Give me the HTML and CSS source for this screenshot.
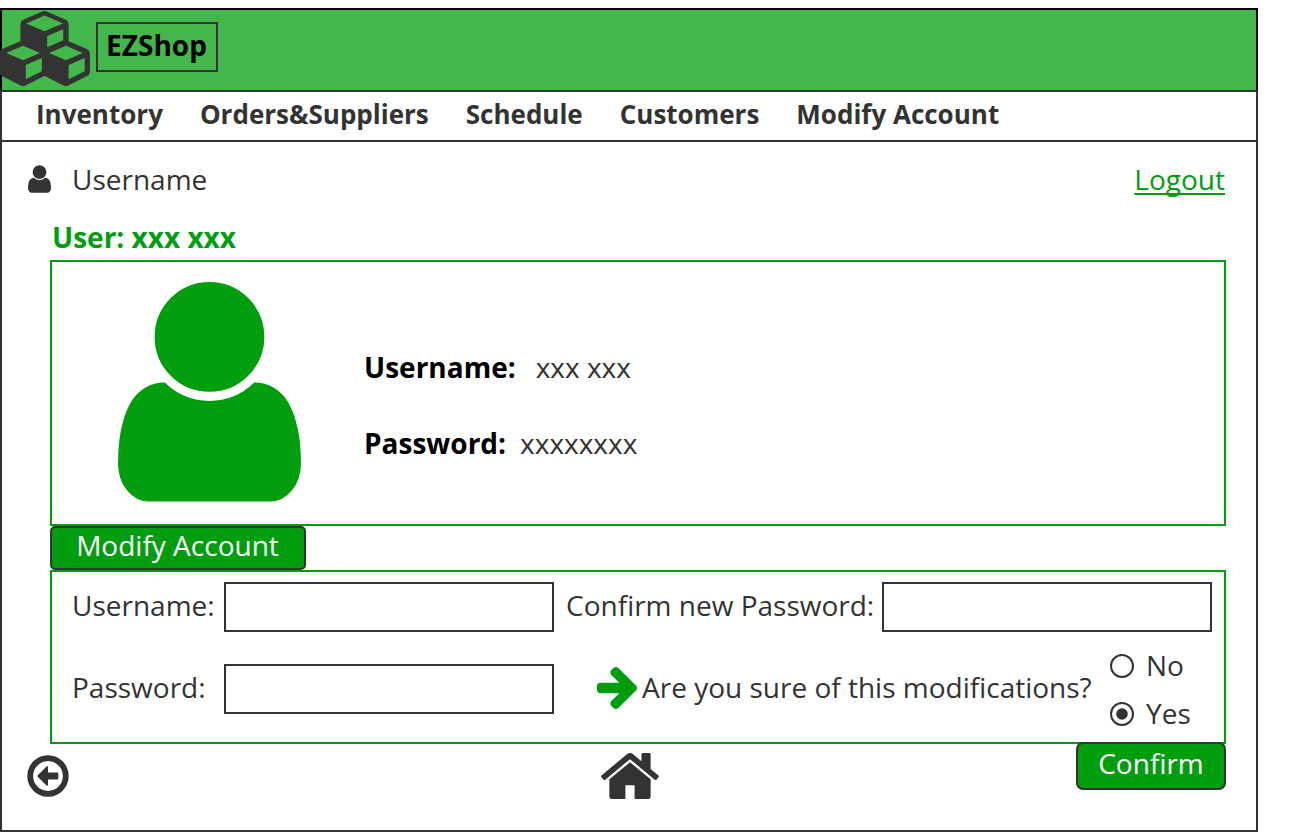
FILE: index.html
```html
<!DOCTYPE html>
<html lang="en">
<head>
<meta charset="utf-8">
<title>EZShop</title>
<link rel="stylesheet" href="styles.css">
</head>
<body>
<div class="window">
  <header class="brand">
    <svg class="logo" viewBox="0 0 2176 1792"><path d="M640 1632l384-192v-314l-384 164v342zM576 1178l404-173-404-173-404 173zM1664 1632l384-192v-314l-384 164v342zM1600 1178l404-173-404-173-404 173zM1152 865l384-165v-266l-384 164v267zM1088 486l441-189-441-189-441 189zM2176 1024v416q0 36-19 67t-52 47l-448 224q-25 14-57 14t-57-14l-448-224q-4-2-7-4-2 2-7 4l-448 224q-25 14-57 14t-57-14l-448-224q-33-16-52-47t-19-67v-416q0-38 21.500-70t56.500-48l434-186v-400q0-38 21.500-70t56.500-48l448-192q23-10 50-10t50 10l448 192q35 16 56.500 48t21.500 70v400l434 186q36 16 57 48t21 70z" fill-rule="evenodd"/></svg>
    <div class="shop-name">EZShop</div>
  </header>
  <nav class="menu">
    <a>Inventory</a><a>Orders&amp;Suppliers</a><a>Schedule</a><a>Customers</a><a>Modify Account</a>
  </nav>
  <main class="content">
    <div class="session">
      <svg class="user-icon" viewBox="256 128 1280 1536"><path d="M1536 1399q0 109-62.500 187t-150.500 78h-854q-88 0-150.500-78t-62.500-187q0-85 8.500-160.500t31.500-152 58.500-131 94-89 134.500-34.500q131 128 313 128t313-128q76 0 134.500 34.500t94 89 58.500 131 31.500 152 8.500 160.500zM1280 512q0 159-112.500 271.500t-271.500 112.500-271.500-112.500-112.500-271.500 112.500-271.500 271.500-112.500 271.500 112.500 112.500 271.500z"/></svg>
      <span class="session-name">Username</span>
      <a class="logout">Logout</a>
    </div>
    <h1 class="title">User: xxx xxx</h1>
    <section class="profile">
      <svg class="avatar" viewBox="256 128 1280 1536"><path d="M1536 1399q0 109-62.500 187t-150.500 78h-854q-88 0-150.500-78t-62.500-187q0-85 8.500-160.500t31.500-152 58.500-131 94-89 134.500-34.500q131 128 313 128t313-128q76 0 134.500 34.500t94 89 58.500 131 31.500 152 8.500 160.500zM1280 512q0 159-112.500 271.500t-271.500 112.500-271.500-112.500-112.500-271.500 112.500-271.500 271.500-112.500 271.500 112.500 112.500 271.500z"/></svg>
      <div class="details">
        <div class="detail"><b>Username:</b><span class="value-name">xxx xxx</span></div>
        <div class="detail"><b>Password:</b><span class="value-pass">xxxxxxxx</span></div>
      </div>
    </section>
    <button class="btn modify">Modify Account</button>
    <section class="form">
      <div class="row first">
        <label class="label">Username:</label><input class="field">
        <label class="label-confirm">Confirm new Password:</label><input class="field">
      </div>
      <div class="row second">
        <label class="label">Password:</label><input class="field">
        <svg class="arrow" viewBox="128 181 1472 1558" preserveAspectRatio="none"><path d="M1600 960q0 54-37 91l-651 651q-39 37-91 37-51 0-90-37l-75-75q-38-38-38-91t38-91l293-293h-704q-52 0-84.500-37.500t-32.500-90.500v-128q0-53 32.500-90.500t84.500-37.500h704l-293-294q-38-36-38-90t38-90l75-75q38-38 90-38 53 0 91 38l651 651q37 35 37 90z"/></svg>
        <span class="question">Are you sure of this modifications?</span>
        <div class="choices">
          <label class="choice"><svg class="radio" viewBox="0 0 24 24"><circle cx="12" cy="12" r="11"/></svg>No</label>
          <label class="choice"><svg class="radio" viewBox="0 0 24 24"><circle cx="12" cy="12" r="11"/><circle class="dot" cx="12" cy="12" r="5.800"/></svg>Yes</label>
        </div>
      </div>
    </section>
    <footer class="footer">
      <svg class="back" viewBox="0 0 42 42"><circle cx="21" cy="21" r="17.800"/><path d="M10 21L19.500 11.500Q21 10.500 21 12.500V17.500H30.500Q31.300 17.500 31.300 18.300V23.700Q31.300 24.500 30.500 24.500H21V29.500Q21 31.500 19.500 30.500Z"/></svg>
      <svg class="home" viewBox="26 253 1612 1283"><path d="M1408 992v480q0 26-19 45t-45 19h-384v-384h-256v384h-384q-26 0-45-19t-19-45v-480q0-1 .5-3t.5-3l575-474 575 474q1 2 1 6zM1631 923l-62 74q-8 9-21 11h-3q-13 0-21-7l-692-577-692 577q-12 8-24 7-13-2-21-11l-62-74q-8-10-7-23.500t11-21.500l719-599q32-26 76-26t76 26l244 204v-195q0-14 9-23t23-9h192q14 0 23 9t9 23v408l219 182q10 8 11 21.500t-7 23.500z"/></svg>
      <button class="btn confirm">Confirm</button>
    </footer>
  </main>
</div>
</body>
</html>
```

FILE: styles.css
```css
* { box-sizing: border-box; }
body {
  margin: 0;
  padding-top: 8px;
  height: 832px;
  overflow: hidden;
  background: #fff;
  color: #333;
  font: 28px/38px "Open Sans", sans-serif;
}
.window { width: 1258px; height: 824px; display: flex; flex-direction: column; }
.brand {
  height: 82px;
  display: flex;
  align-items: flex-start;
  background: #43b74b;
  border: 2px solid #000;
  border-bottom: 0;
}
.logo { width: 91px; height: 75px; margin: 1px 0 0 -3px; fill: #333; flex: none; }
.shop-name {
  width: 122px;
  height: 50px;
  margin: 12px 0 0 6px;
  padding: 2px 1px 0 0;
  border: 2px solid #333;
  color: #000;
  font-weight: 700;
  text-align: center;
}
.menu {
  height: 52px;
  display: flex;
  gap: 37px;
  padding: 3px 0 0 34px;
  border: 2px solid #333;
  font-size: 26px;
  font-weight: 700;
}
.content { flex: 1; padding: 0 30px 0 48px; border: 2px solid #333; border-top: 0; }
.session { display: flex; margin-left: -23px; padding-top: 18px; height: 75px; }
.user-icon { width: 23px; height: 28px; margin: 4.500px 0 0 1px; fill: #333; }
.session-name { margin-left: 21px; }
.logout {
  margin-left: auto;
  height: 35px;
  padding: 0 1px;
  color: #009e0f;
  text-decoration: underline;
  text-decoration-thickness: 2px;
  text-underline-offset: 3px;
  text-decoration-skip-ink: none;
}
.title { margin: 0; padding-left: 2px; height: 43px; color: #009e0f; font-size: 28px; line-height: 40px; }
.profile { height: 266px; display: flex; border: 2px solid #009e0f; padding: 20px 0 0 66px; }
.avatar { width: 183px; height: 219.500px; fill: #009e0f; }
.details { margin: 66px 0 0 63px; display: flex; flex-direction: column; gap: 38px; }
.detail b { color: #000; }
.value-name { margin-left: 20px; }
.value-pass { margin-left: 14px; }
.btn {
  display: block;
  padding: 0;
  border: 2px solid #333;
  background: #009e0f;
  color: #fff;
  font: 28px/36px "Open Sans", sans-serif;
}
.modify { width: 256px; height: 44px; border-radius: 5px; padding: 0 1px 6px 0; line-height: 34px; }
.form { height: 174px; border: 2px solid #009e0f; padding: 10px 0 0 20px; }
.row { display: flex; }
.first { height: 70px; }
.label, .label-confirm { padding-top: 4px; }
.label { width: 152px; }
.label-confirm { width: 316px; margin-left: 12px; white-space: nowrap; }
.field { width: 330px; height: 50px; border: 2px solid #333; border-radius: 0; background: #fff; font: inherit; padding: 0 8px; }
.second .label, .second .field { margin-top: 12px; }
.arrow { width: 40px; height: 42px; margin: 15px 0 0 43px; fill: #009e0f; }
.question { width: 467px; margin-left: 5px; padding-top: 16px; white-space: nowrap; }
.choices { display: flex; flex-direction: column; gap: 10px; margin: -6px 0 0 1px; }
.choice { display: flex; align-items: flex-start; gap: 12px; height: 38px; }
.radio { width: 24px; height: 24px; margin-top: 8px; fill: none; stroke: #333; stroke-width: 2; }
.radio .dot { fill: #333; stroke: none; }
.footer { display: flex; align-items: flex-start; margin: -2px 0 0 -23.500px; }
.back { width: 42px; height: 42px; margin-top: 13px; fill: #333; }
.back circle { fill: none; stroke: #333; stroke-width: 5.800; }
.home { width: 58px; height: 46px; margin: 11px 0 0 532.500px; fill: #333; }
.confirm { width: 150px; height: 48px; margin-left: auto; border-radius: 7px; padding-bottom: 6px; }
```
